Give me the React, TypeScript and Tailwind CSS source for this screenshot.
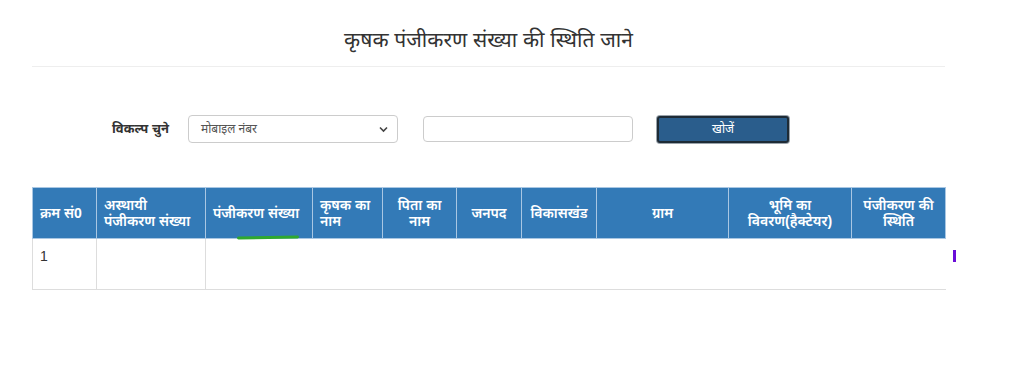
const cols: { label: string; w: string; align: string }[] = [
  { label: 'क्रम सं0', w: 'w-[64px]', align: 'text-left' },
  { label: 'अस्थायी पंजीकरण संख्या', w: 'w-[109px]', align: 'text-left' },
  { label: 'पंजीकरण संख्या', w: 'w-[107px]', align: 'text-left' },
  { label: 'कृषक का नाम', w: 'w-[70px]', align: 'text-left' },
  { label: 'पिता का नाम', w: 'w-[74px]', align: 'text-center' },
  { label: 'जनपद', w: 'w-[65px]', align: 'text-center' },
  { label: 'विकासखंड', w: 'w-[75px]', align: 'text-center' },
  { label: 'ग्राम', w: 'w-[132px]', align: 'text-center' },
  { label: 'भूमि का विवरण(हैक्टेयर)', w: 'w-[123px]', align: 'text-center' },
  { label: 'पंजीकरण की स्थिति', w: 'w-[94px]', align: 'text-center' },
];

export default function App() {
  return (
    <div className="w-[1024px] h-[386px] bg-white font-['Liberation_Sans','Noto_Sans',sans-serif] text-[#333]">
      <div className="ml-[32px] w-[913px] pt-[24px] text-center text-[21px] leading-[32px] text-[#333]">
        कृषक पंजीकरण संख्या की स्थिति जाने
      </div>
      <div className="ml-[32px] w-[913px] mt-[10px] border-t border-[#eeeeee]" />

      <div className="flex items-center mt-[48px] h-[28px]">
        <label className="ml-[112px] w-[76px] text-[13px] font-bold text-[#333]">विकल्प चुने</label>
        <div className="relative w-[210px] h-[28px] rounded border border-[#cccccc] flex items-center px-[12px] text-[12px] text-[#555]">
          मोबाइल नंबर
          <svg className="absolute right-[9px] top-[10px]" width="9" height="7" viewBox="0 0 9 7">
            <path d="M1 1.5 L4.5 5 L8 1.5" fill="none" stroke="#444" strokeWidth="1.6" />
          </svg>
        </div>
        <input className="ml-[25px] w-[210px] h-[26px] rounded border border-[#cccccc] outline-none" />
        <button className="ml-[24px] w-[132px] h-[27px] bg-[#2a5d8c] border-2 border-[#1e2b36] rounded-[3px] ring-1 ring-[#9aa3ab] text-white text-[12px] leading-none">
          खोजें
        </button>
      </div>

      <div className="relative ml-[32px] mt-[44px] w-[913px]">
        <table className="table-fixed w-[913px] border-collapse">
          <thead>
            <tr className="h-[51px] bg-[#337ab7]">
              {cols.map((c) => (
                <th
                  key={c.label}
                  className={`${c.w} ${c.align} border border-[#a9c7e3] px-[7px] text-[14px] leading-[16px] font-semibold text-white align-middle`}
                >
                  {c.label}
                </th>
              ))}
            </tr>
          </thead>
          <tbody>
            <tr className="h-[51px]">
              <td className="border-l border-b border-r border-[#dddddd] px-[7px] align-top pt-[7px] text-[14px] text-[#333]">1</td>
              <td className="border-b border-r border-[#dddddd]" />
              <td colSpan={8} className="border-b border-[#dddddd]" />
            </tr>
          </tbody>
        </table>
        <div className="absolute left-[205px] top-[49px] w-[62px] h-[3px] rounded-full bg-[#2fa82f] -rotate-1" />
        <div className="absolute left-[921px] top-[63px] w-[3px] h-[12px] bg-[#6a0dd8]" />
      </div>
    </div>
  );
}
